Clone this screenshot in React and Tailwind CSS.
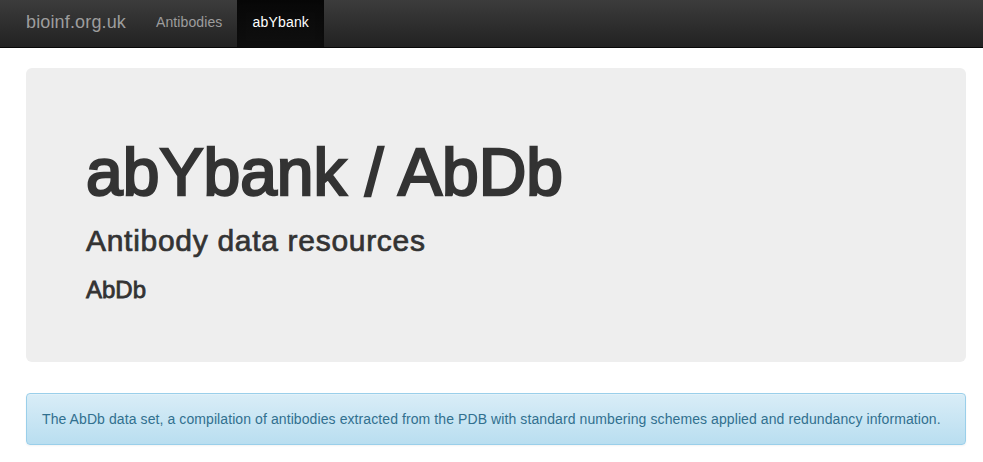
import React from 'react';

const font = { fontFamily: '"Liberation Sans", Arial, sans-serif' };

function Navbar() {
  return (
    <nav className="h-[48px] border-b border-[#080808] bg-gradient-to-b from-[#3c3c3c] to-[#222222] flex pl-[11px]">
      <a className="h-full flex items-center pb-[4px] px-[15px] text-[18px] leading-[20px] tracking-[0.15px] text-[#9d9d9d]">
        bioinf.org.uk
      </a>
      <a className="h-full flex items-center pb-[4px] px-[15px] text-[14px] leading-[20px] tracking-[0.1px] text-[#9d9d9d]">
        Antibodies
      </a>
      <a className="h-full flex items-center pb-[4px] px-[15px] text-[14px] leading-[20px] tracking-[0.2px] text-white bg-gradient-to-b from-[#080808] to-[#0f0f0f] shadow-[inset_0_3px_9px_rgba(0,0,0,0.25)]">
        abYbank
      </a>
    </nav>
  );
}

export default function App() {
  return (
    <div className="min-h-[462px] bg-white text-[#333333]" style={font}>
      <Navbar />
      <main className="ml-[26px] w-[940px] pt-[20px]">
        {/* jumbotron */}
        <div className="bg-[#eeeeee] rounded-[6px] pt-[68px] pb-[59px] px-[60px]">
          <h1 className="text-[66px] leading-[72px] [-webkit-text-stroke:2.4px_#333333]">abYbank / AbDb</h1>
          <h2 className="mt-[16px] text-[30px] leading-[33px] tracking-[0.7px] [-webkit-text-stroke:0.7px_#333333]">Antibody data resources</h2>
          <h3 className="mt-[20px] text-[24px] leading-[26px] [-webkit-text-stroke:0.8px_#333333]">AbDb</h3>
        </div>

        <div className="mt-[31px] rounded-[4px] border border-[#9acfea] bg-gradient-to-b from-[#d9edf7] to-[#b9def0] p-[15px] text-[14px] leading-[20px] tracking-[0.09px] text-[#31708f] shadow-[inset_0_1px_0_rgba(255,255,255,0.25),0_1px_2px_rgba(0,0,0,0.05)]">
          The AbDb data set, a compilation of antibodies extracted from the PDB with standard numbering schemes applied and redundancy information.
        </div>
      </main>
    </div>
  );
}
